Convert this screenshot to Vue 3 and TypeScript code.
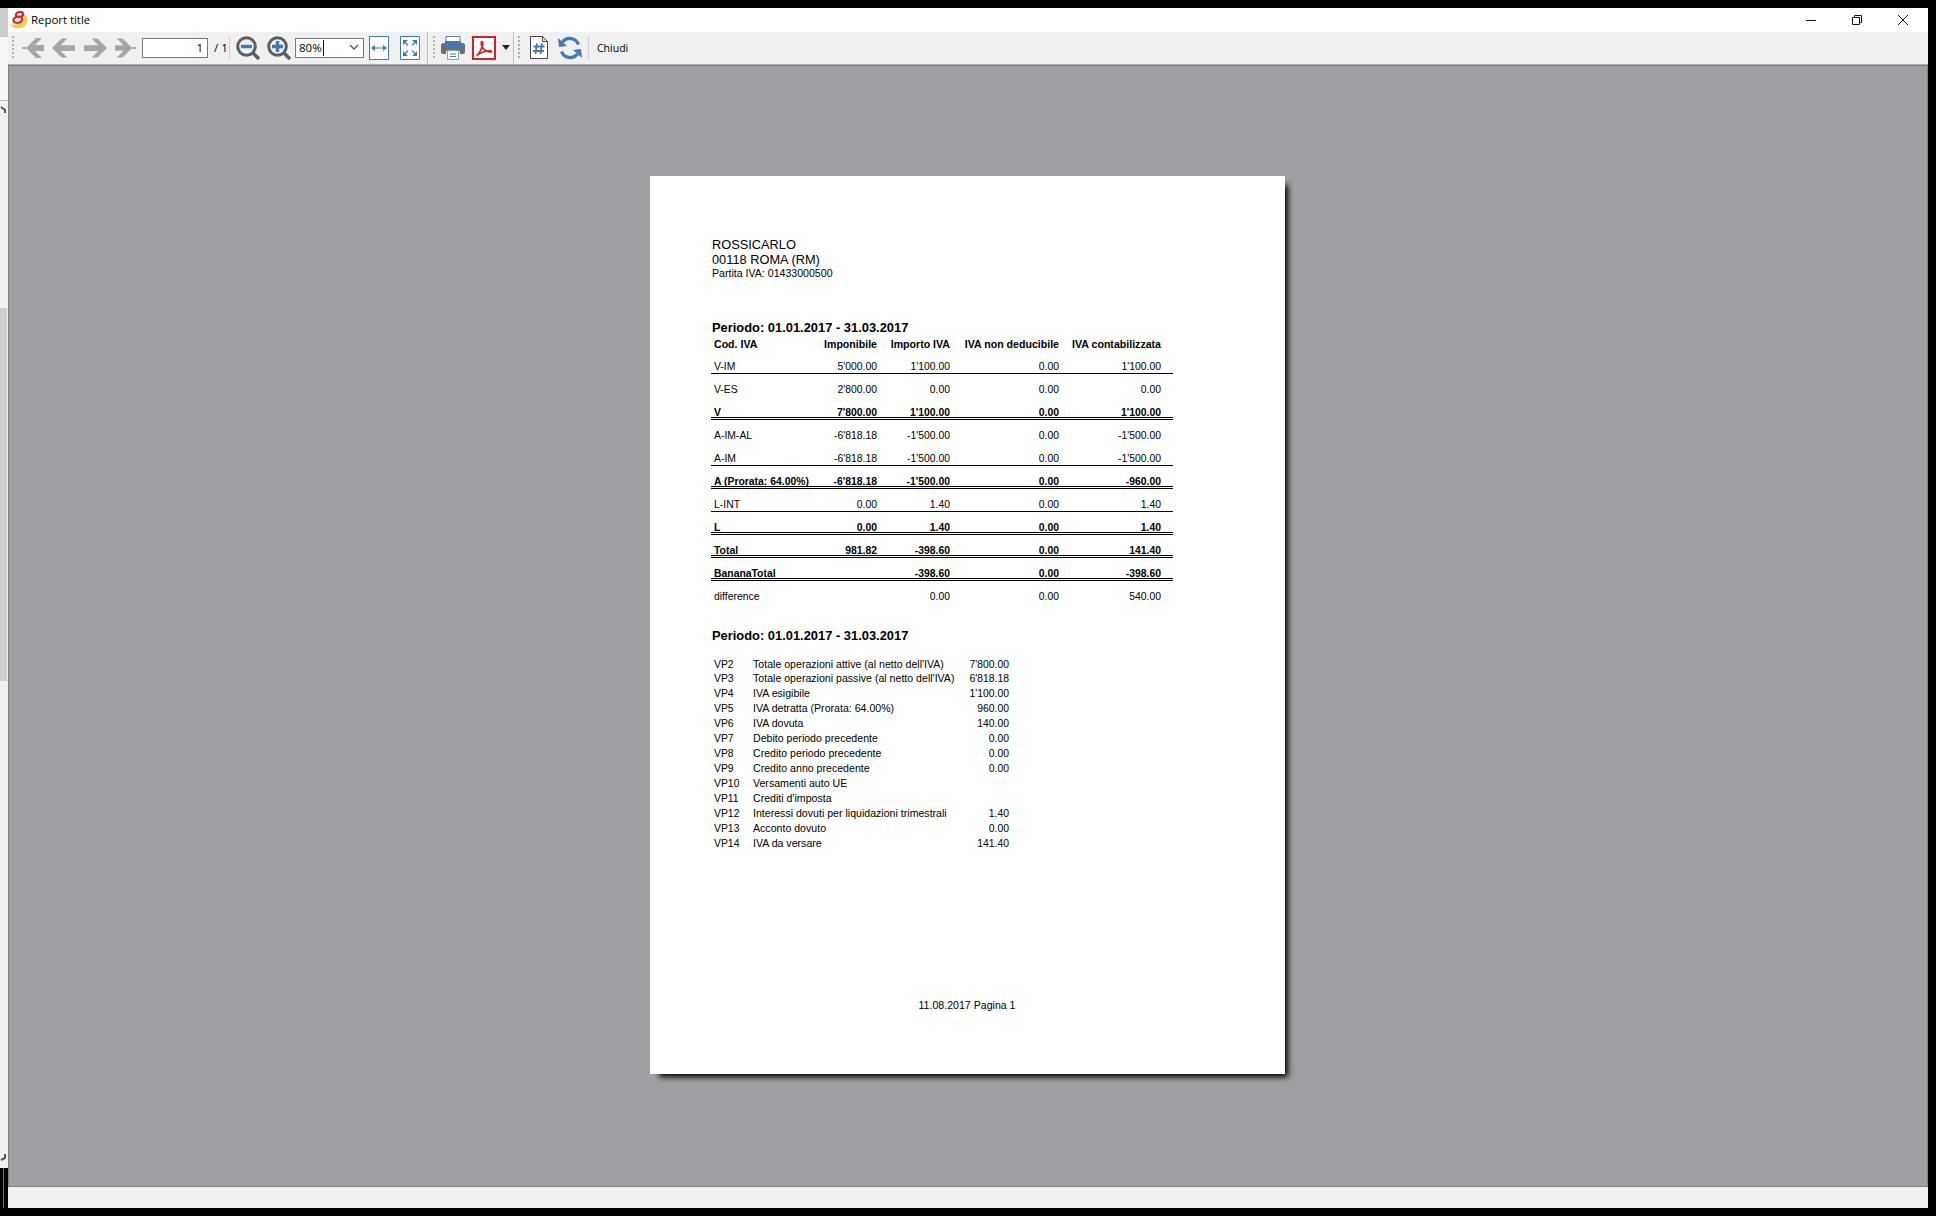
<script setup lang="ts">
interface TaxRow {
  code: string
  values: string[]
  kind: 'plain' | 'single' | 'total'
}

const headers = ['Imponibile', 'Importo IVA', 'IVA non deducibile', 'IVA contabilizzata']

const taxRows: TaxRow[] = [
  { code: 'V-IM', values: ["5'000.00", "1'100.00", '0.00', "1'100.00"], kind: 'single' },
  { code: 'V-ES', values: ["2'800.00", '0.00', '0.00', '0.00'], kind: 'plain' },
  { code: 'V', values: ["7'800.00", "1'100.00", '0.00', "1'100.00"], kind: 'total' },
  { code: 'A-IM-AL', values: ["-6'818.18", "-1'500.00", '0.00', "-1'500.00"], kind: 'plain' },
  { code: 'A-IM', values: ["-6'818.18", "-1'500.00", '0.00', "-1'500.00"], kind: 'single' },
  { code: 'A (Prorata: 64.00%)', values: ["-6'818.18", "-1'500.00", '0.00', '-960.00'], kind: 'total' },
  { code: 'L-INT', values: ['0.00', '1.40', '0.00', '1.40'], kind: 'single' },
  { code: 'L', values: ['0.00', '1.40', '0.00', '1.40'], kind: 'total' },
  { code: 'Total', values: ['981.82', '-398.60', '0.00', '141.40'], kind: 'total' },
  { code: 'BananaTotal', values: ['', '-398.60', '0.00', '-398.60'], kind: 'total' },
  { code: 'difference', values: ['', '0.00', '0.00', '540.00'], kind: 'plain' },
]

const vpRows = [
  ['VP2', "Totale operazioni attive (al netto dell'IVA)", "7'800.00"],
  ['VP3', "Totale operazioni passive (al netto dell'IVA)", "6'818.18"],
  ['VP4', 'IVA esigibile', "1'100.00"],
  ['VP5', 'IVA detratta (Prorata: 64.00%)', '960.00'],
  ['VP6', 'IVA dovuta', '140.00'],
  ['VP7', 'Debito periodo precedente', '0.00'],
  ['VP8', 'Credito periodo precedente', '0.00'],
  ['VP9', 'Credito anno precedente', '0.00'],
  ['VP10', 'Versamenti auto UE', ''],
  ['VP11', "Crediti d'imposta", ''],
  ['VP12', 'Interessi dovuti per liquidazioni trimestrali', '1.40'],
  ['VP13', 'Acconto dovuto', '0.00'],
  ['VP14', 'IVA da versare', '141.40'],
]
</script>

<template>
  <div class="screen">
    <div class="side">
      <div class="side-top"></div>
      <div class="side-light"></div>
      <div class="side-track">
        <svg class="side-arrow" width="7" height="8" viewBox="0 0 7 8"><path d="M1 1l4 3v3" fill="none" stroke="#555" stroke-width="2" /></svg>
        <div class="side-thumb"></div>
        <svg class="side-arrow side-arrow-end" width="7" height="8" viewBox="0 0 7 8"><path d="M1 6l4-2V0" fill="none" stroke="#555" stroke-width="2" /></svg>
      </div>
      <div class="side-black"></div>
    </div>

    <div class="window">
      <div class="titlebar">
        <svg class="logo" width="18" height="18" viewBox="0 0 18 18">
          <path d="M0 13.500C6 15 13 11.500 15 3c3 2.500 3.500 8 .5 11.500-3.500 4-12 4-15.500-1z" fill="#f2cf55" />
          <g fill="none" stroke="#d9232e" stroke-width="2.200">
            <ellipse cx="9.500" cy="3.500" rx="3.600" ry="2.400" transform="rotate(-12 9.500 3.500)" />
            <ellipse cx="7.800" cy="8.800" rx="4.400" ry="3" transform="rotate(-12 7.800 8.800)" />
          </g>
        </svg>
        <span class="title">Report title</span>
        <div class="win-controls">
          <svg width="10" height="10" viewBox="0 0 10 10"><path d="M0 5.500h10" stroke="#111" fill="none" /></svg>
          <svg width="10" height="10" viewBox="0 0 10 10"><path d="M.5 2.500h7v7h-7zM2.500 2.500v-2h7v7h-2" stroke="#111" fill="none" /></svg>
          <svg width="10" height="10" viewBox="0 0 10 10"><path d="M0 0l10 10M10 0L0 10" stroke="#111" fill="none" /></svg>
        </div>
      </div>

      <div class="toolbar">
        <span class="grip first-grip"></span>

        <div class="nav-group">
          <svg width="22" height="20" viewBox="0 0 22 20"><path d="M4 10L14 0h6l-7 7h9v6h-9l7 7h-6zM0 9h4v2H0z" fill="#a6a6a6" /></svg>
          <svg width="23" height="20" viewBox="0 0 24 20"><path d="M0 10L10 0h6L9 7h15v6H9l7 7h-6z" fill="#a6a6a6" /></svg>
          <svg class="nav-forward" width="23" height="20" viewBox="0 0 24 20"><path d="M24 10L14 0H8l7 7H0v6h15l-7 7h6z" fill="#a6a6a6" /></svg>
          <svg width="21" height="20" viewBox="0 0 22 20"><path d="M18 10L8 0H2l7 7H0v6h9l-7 7h6zM18 9h4v2h-4z" fill="#a6a6a6" /></svg>
        </div>

        <div class="page-input">1</div>
        <span class="page-count">/ 1</span>
        <span class="divider page-divider"></span>

        <div class="zoom-group">
          <svg width="24" height="24" viewBox="0 0 24 24">
            <circle cx="10.500" cy="10.500" r="8.800" fill="none" stroke="#5c5f62" stroke-width="3" />
            <path d="M17 17l6 6" stroke="#5c5f62" stroke-width="3.600" />
            <path d="M5 10.500h11" stroke="#3f7ab5" stroke-width="3.400" />
          </svg>
          <svg width="24" height="24" viewBox="0 0 24 24">
            <circle cx="10.500" cy="10.500" r="8.800" fill="none" stroke="#5c5f62" stroke-width="3" />
            <path d="M17 17l6 6" stroke="#5c5f62" stroke-width="3.600" />
            <path d="M5 10.500h11M10.500 5v11" stroke="#3f7ab5" stroke-width="3.400" />
          </svg>
        </div>

        <div class="zoom-combo">
          <span class="zoom-value">80%</span>
          <svg width="12" height="7" viewBox="0 0 12 7"><path d="M2 1l4 4 4-4" fill="none" stroke="#555" stroke-width="1.300" /></svg>
        </div>

        <div class="fit-group">
          <svg width="20" height="24" viewBox="0 0 20 24">
            <path d="M.5.500h19v23H.5z" fill="#fff" stroke="#3f7ab5" />
            <path d="M3 12h14" stroke="#3f7ab5" />
            <path d="M2 12l4-3v6zM18 12l-4-3v6z" fill="#3f7ab5" />
          </svg>
          <svg width="20" height="24" viewBox="0 0 20 24">
            <path d="M.5.500h19v23H.5z" fill="#fff" stroke="#3f7ab5" />
            <path d="M4 5l4 4.500M16 5l-4 4.500M4 19l4-4.500M16 19l-4-4.500" stroke="#3f7ab5" stroke-width="1.200" />
            <path d="M3 4h5L3 9zM17 4h-5l5 5zM3 20h5l-5-5zM17 20h-5l5-5z" fill="#3f7ab5" />
          </svg>
        </div>

        <span class="bar-sep fit-sep"></span>
        <span class="grip print-grip"></span>

        <svg class="printer" width="24" height="24" viewBox="0 0 24 24">
          <path d="M5 .500h14v6H5z" fill="#fff" stroke="#777" />
          <path d="M4 5h16v3H4z" fill="#3f7ab5" />
          <path d="M2 7h20c1 0 2 1 2 2v7c0 1-1 2-2 2h-3v-3H5v3H2c-1 0-2-1-2-2V9c0-1 1-2 2-2z" fill="#6b6f73" />
          <path d="M3 8h18v3H3z" fill="#3f7ab5" />
          <path d="M6.500 14.500h11v9h-11z" fill="#fff" stroke="#7ea6cd" />
          <path d="M9 18h6M9 20.500h6" stroke="#3f7ab5" />
        </svg>
        <svg class="pdf" width="24" height="24" viewBox="0 0 24 24">
          <path d="M1 1h22v22H1z" fill="#fff" stroke="#c7262b" stroke-width="2" />
          <path d="M4.500 19.500c2-1 5-6 6-10 .5-2 .5-4-.5-4s-1 2-.3 4c1 3 4 6 8 6.500 1.500.2 2-.5 1.500-1s-4-.5-8 1c-3 1.200-5.700 2.800-6.700 3.500z" fill="none" stroke="#c7262b" stroke-width="1.700" />
        </svg>
        <svg class="pdf-drop" width="8" height="5" viewBox="0 0 8 5"><path d="M0 0h8L4 5z" fill="#222" /></svg>
        <span class="bar-sep pdf-sep"></span>
        <span class="grip doc-grip"></span>

        <svg class="doc" width="18" height="23" viewBox="0 0 18 23">
          <path d="M.5.500h12l5 5v17H.5zM12.500.500v5h5" fill="#fff" stroke="#444" />
          <path d="M7 7.500L5.500 18M12 7.500L10.500 18M3.500 10.500h11M3 15h11" fill="none" stroke="#3f7ab5" stroke-width="1.800" />
        </svg>
        <svg class="refresh" width="24" height="24" viewBox="0 0 24 24">
          <path d="M20.500 8.500A9.300 9.300 0 0 0 4.500 6" fill="none" stroke="#3f7ab5" stroke-width="3.200" />
          <path d="M3.500 15.500A9.300 9.300 0 0 0 19.500 18" fill="none" stroke="#3f7ab5" stroke-width="3.200" />
          <path d="M0 2l1 9 8-1zM24 22l-1-9-8 1z" fill="#3f7ab5" />
        </svg>
        <span class="divider close-divider"></span>
        <span class="close-label">Chiudi</span>
      </div>

      <div class="content">
        <div class="page">
          <div class="head-line">ROSSICARLO</div>
          <div class="head-line">00118 ROMA (RM)</div>
          <div class="vat-line">Partita IVA: 01433000500</div>

          <div class="period first-period">Periodo: 01.01.2017 - 31.03.2017</div>
          <div class="tax-row tax-head">
            <div class="code">Cod. IVA</div>
            <div v-for="h in headers" :key="h" class="num">{{ h }}</div>
          </div>
          <div v-for="row in taxRows" :key="row.code" class="tax-row" :class="row.kind">
            <div class="code">{{ row.code }}</div>
            <div v-for="(v, i) in row.values" :key="i" class="num">{{ v }}</div>
          </div>

          <div class="period second-period">Periodo: 01.01.2017 - 31.03.2017</div>
          <div class="vp-list">
            <div v-for="vp in vpRows" :key="vp[0]" class="vp-row">
              <span>{{ vp[0] }}</span>
              <span class="vp-text">{{ vp[1] }}</span>
              <span class="num">{{ vp[2] }}</span>
            </div>
          </div>

          <div class="foot">11.08.2017 Pagina 1</div>
        </div>
      </div>

      <div class="statusbar"></div>
    </div>
  </div>
</template>

<style scoped>
.screen {
  display: flex;
  width: 1936px;
  height: 1216px;
  overflow: hidden;
  background: #000;
  font-family: "Liberation Sans", Arial, sans-serif;
  color: #000;
}

/* strip of the window behind */
.side {
  display: flex;
  flex-direction: column;
  flex: none;
  width: 8px;
  padding-top: 8px;
  box-sizing: border-box;
}
.side-top {
  height: 29px;
  background: #cccccc;
}
.side-light {
  height: 63px;
  background: #f8f8f8;
  border-bottom: 1px solid #bdbdbd;
}
.side-track {
  display: flex;
  flex-direction: column;
  height: 1067px;
  background: #f0f0f0;
}
.side-arrow {
  flex: none;
  margin-top: 5px;
}
.side-thumb {
  flex: none;
  width: 7px;
  height: 373px;
  margin-top: 194px;
  background: #cdcdcd;
}
.side-arrow-end {
  margin-top: auto;
  margin-bottom: 6px;
}
.side-black {
  flex: 1;
  width: 1px;
  margin-left: 3px;
  background: #6f6f6f;
  margin-bottom: 8px;
}

.window {
  display: flex;
  flex-direction: column;
  flex: none;
  width: 1920px;
  height: 1200px;
  margin-top: 8px;
}

.titlebar {
  display: flex;
  align-items: center;
  flex: none;
  height: 24px;
  background: #fff;
}
.logo {
  margin-left: 2px;
}
.title {
  margin-left: 3px;
  padding-bottom: 2px;
  font-family: "Open Sans", sans-serif;
  font-size: 11.400px;
}
.win-controls {
  display: flex;
  gap: 36px;
  margin-left: auto;
  margin-right: 20px;
}

.toolbar {
  display: flex;
  align-items: center;
  flex: none;
  height: 33px;
  box-sizing: border-box;
  padding-bottom: 1px;
  background: #f0f0f0;
  border-bottom: 1px solid #a9a9a9;
}
.toolbar > * {
  flex: none;
}
.grip {
  width: 2px;
  height: 24px;
  background: repeating-linear-gradient(to bottom, #b0b0b0 0 2px, transparent 2px 4px);
}
.first-grip {
  margin-left: 4px;
}
.nav-group {
  display: flex;
  gap: 8px;
  margin-left: 8px;
}
.nav-forward {
  margin-left: 1px;
}
.page-input {
  width: 66px;
  height: 20px;
  box-sizing: border-box;
  margin-left: 6px;
  padding-right: 4px;
  background: #fff;
  border: 1px solid #7a7a7a;
  text-align: right;
  font: 11.500px/18px "Open Sans", sans-serif;
}
.page-count {
  width: 13px;
  margin-left: 6px;
  font: 11.500px "Open Sans", sans-serif;
  white-space: nowrap;
}
.divider {
  width: 1px;
  height: 24px;
  background: #cfcfcf;
}
.page-divider {
  margin-left: 2px;
}
.zoom-group {
  display: flex;
  gap: 7px;
  margin-left: 6px;
}
.zoom-combo {
  display: flex;
  align-items: center;
  justify-content: space-between;
  width: 69px;
  height: 20px;
  box-sizing: border-box;
  margin-left: 4px;
  padding: 0 3px 0 3px;
  background: #fff;
  border: 1px solid #7a7a7a;
}
.zoom-value {
  padding-right: 1px;
  border-right: 1px solid #111;
  font: 11.500px/16px "Open Sans", sans-serif;
}
.fit-group {
  display: flex;
  gap: 11px;
  margin-left: 5px;
}
.bar-sep {
  width: 1px;
  height: 32px;
  background: #bcbcbc;
  border-right: 1px solid #fafafa;
}
.fit-sep {
  margin-left: 7px;
}
.print-grip {
  margin-left: 4px;
}
.printer {
  margin-left: 6px;
}
.pdf {
  margin-left: 7px;
}
.pdf-drop {
  margin-left: 6px;
}
.pdf-sep {
  margin-left: 3px;
}
.doc-grip {
  margin-left: 3px;
}
.doc {
  margin-left: 10px;
}
.refresh {
  margin-left: 10px;
}
.close-divider {
  margin-left: 6px;
}
.close-label {
  margin-left: 8px;
  font: 10.500px "Open Sans", sans-serif;
}

.content {
  display: flex;
  justify-content: center;
  flex: 1;
  min-height: 0;
  box-sizing: border-box;
  padding-top: 110px;
  padding-right: 1px;
  background: #a0a0a4;
  border: 1px solid #7f7f84;
}
.page {
  flex: none;
  width: 635px;
  height: 898px;
  box-sizing: border-box;
  padding: 61px 0 0 62px;
  background: #fff;
  box-shadow: 6px 6px 6px -3px #000;
  font-size: 10.400px;
}
.head-line {
  font-size: 12.800px;
  line-height: 15px;
}
.vat-line {
  font-size: 10.600px;
  line-height: 13px;
}
.period {
  font-size: 12.900px;
  line-height: 15px;
  font-weight: 700;
}
.first-period {
  margin-top: 40px;
}
.second-period {
  margin-top: 24px;
}

.tax-row {
  display: grid;
  grid-template-columns: 110px 56px 73px 109px 102px;
  width: 462px;
  height: 23px;
  box-sizing: border-box;
  margin-left: -1px;
  padding-top: 9px;
  line-height: 13px;
  white-space: nowrap;
}
.tax-head {
  height: 16px;
  padding-top: 3px;
  font-size: 10.600px;
  font-weight: 700;
}
.code {
  padding-left: 3px;
}
.num {
  text-align: right;
}
.single {
  border-bottom: 1px solid #000;
}
.total {
  border-bottom: 3px double #000;
  font-weight: 700;
}

.vp-list {
  margin-top: 14px;
}
.vp-row {
  display: grid;
  grid-template-columns: 39px 209px 47px;
  height: 15px;
  padding-left: 2px;
  line-height: 15px;
  white-space: nowrap;
}
.vp-row:first-child {
  height: 14px;
}
.vp-text {
  font-size: 10.600px;
}

.foot {
  width: 512px;
  margin-top: 148px;
  margin-left: -1px;
  font-size: 10.600px;
  line-height: 13px;
  text-align: center;
}

.statusbar {
  flex: none;
  height: 21px;
  background: #f0f0f0;
}
</style>
